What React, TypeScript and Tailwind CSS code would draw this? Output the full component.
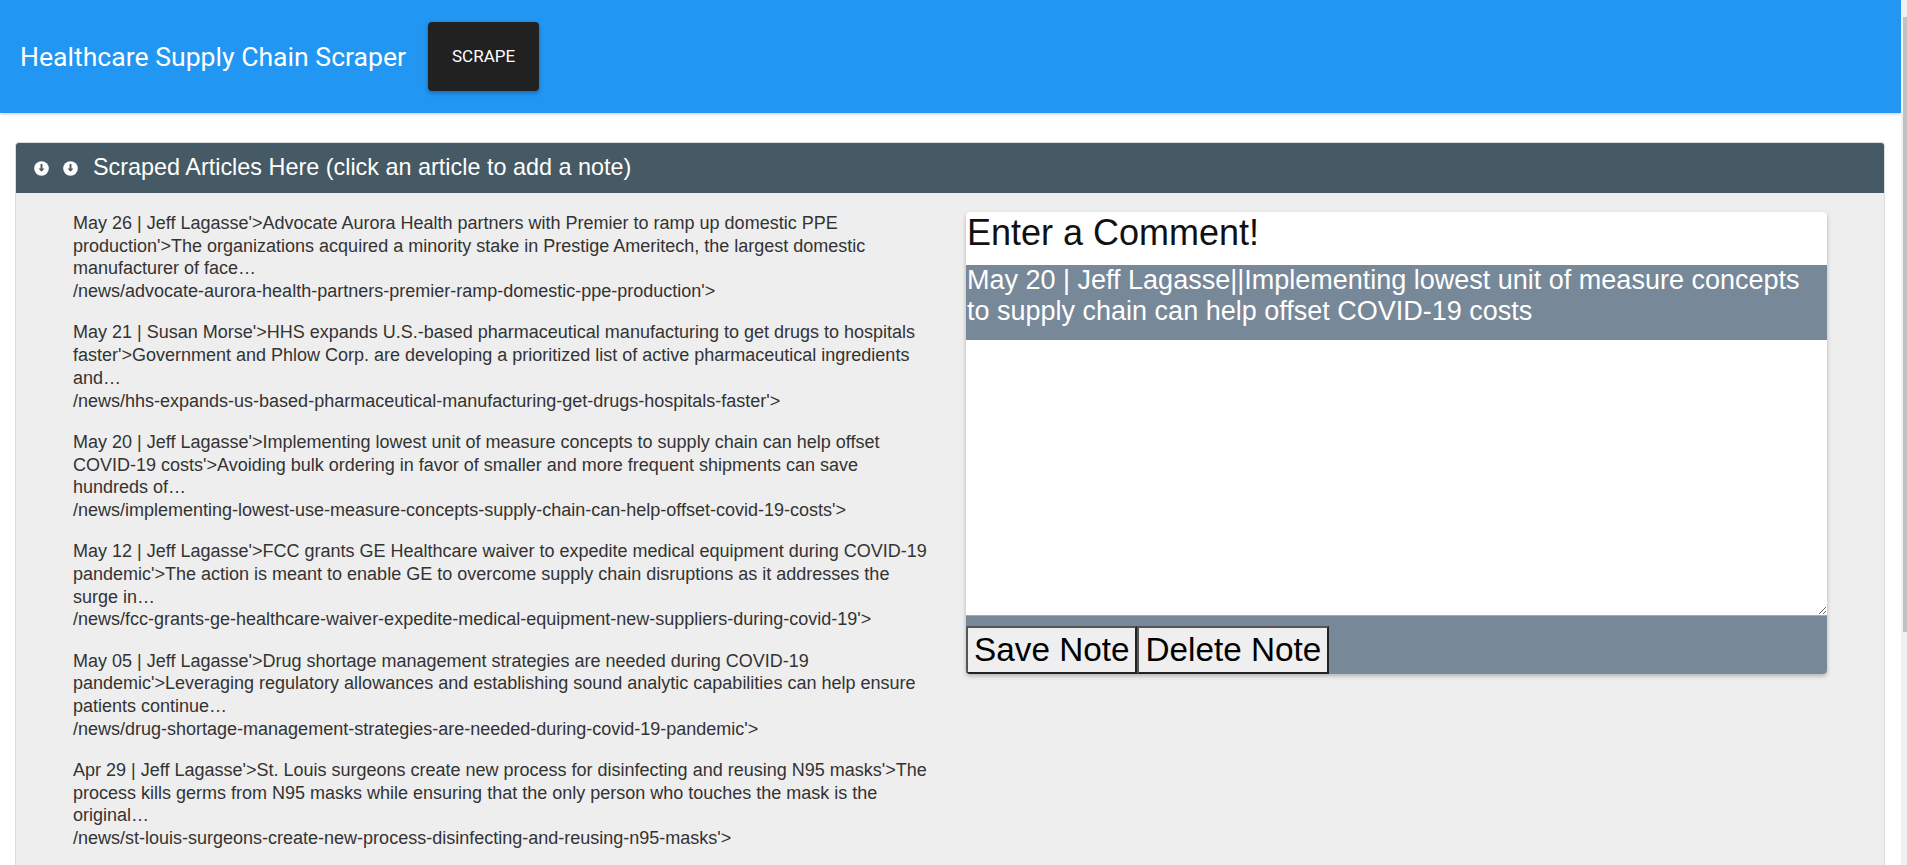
import * as React from "react";

const articles = [
  {
    text: "May 26 | Jeff Lagasse'>Advocate Aurora Health partners with Premier to ramp up domestic PPE production'>The organizations acquired a minority stake in Prestige Ameritech, the largest domestic manufacturer of face…",
    url: "/news/advocate-aurora-health-partners-premier-ramp-domestic-ppe-production'>",
  },
  {
    text: "May 21 | Susan Morse'>HHS expands U.S.-based pharmaceutical manufacturing to get drugs to hospitals faster'>Government and Phlow Corp. are developing a prioritized list of active pharmaceutical ingredients and…",
    url: "/news/hhs-expands-us-based-pharmaceutical-manufacturing-get-drugs-hospitals-faster'>",
  },
  {
    text: "May 20 | Jeff Lagasse'>Implementing lowest unit of measure concepts to supply chain can help offset COVID-19 costs'>Avoiding bulk ordering in favor of smaller and more frequent shipments can save hundreds of…",
    url: "/news/implementing-lowest-use-measure-concepts-supply-chain-can-help-offset-covid-19-costs'>",
  },
  {
    text: "May 12 | Jeff Lagasse'>FCC grants GE Healthcare waiver to expedite medical equipment during COVID-19 pandemic'>The action is meant to enable GE to overcome supply chain disruptions as it addresses the surge in…",
    url: "/news/fcc-grants-ge-healthcare-waiver-expedite-medical-equipment-new-suppliers-during-covid-19'>",
  },
  {
    text: "May 05 | Jeff Lagasse'>Drug shortage management strategies are needed during COVID-19 pandemic'>Leveraging regulatory allowances and establishing sound analytic capabilities can help ensure patients continue…",
    url: "/news/drug-shortage-management-strategies-are-needed-during-covid-19-pandemic'>",
  },
  {
    text: "Apr 29 | Jeff Lagasse'>St. Louis surgeons create new process for disinfecting and reusing N95 masks'>The process kills germs from N95 masks while ensuring that the only person who touches the mask is the original…",
    url: "/news/st-louis-surgeons-create-new-process-disinfecting-and-reusing-n95-masks'>",
  },
];

function CircleDown() {
  return (
    <svg width="15" height="15" viewBox="0 0 14 14" className="shrink-0">
      <circle cx="7" cy="7" r="6.8" fill="#ffffff" />
      <path d="M7 3.5v4.5" stroke="#455a64" strokeWidth="1.8" strokeLinecap="round" />
      <path d="M4.3 7.1L7 10l2.7-2.9z" fill="#455a64" />
    </svg>
  );
}

export default function App() {
  return (
    <div className="flex h-[865px] overflow-hidden bg-white font-['Liberation_Sans',Arial,sans-serif]">
      <div className="flex min-w-0 flex-1 flex-col">
        <header className="flex h-[113px] shrink-0 items-center bg-[#2196f3] shadow-[0_2px_2px_rgba(0,0,0,0.14)]">
          <h1 className="pl-[20px] font-['Roboto',sans-serif] text-[26.6px] text-white">
            Healthcare Supply Chain Scraper
          </h1>
          <button className="ml-[22px] flex h-[69px] w-[111px] items-center justify-center rounded-[4px] bg-[#212121] font-['Roboto',sans-serif] text-[17px] text-white shadow-[0_2px_4px_rgba(0,0,0,0.3)]">
            SCRAPE
          </button>
        </header>

        <div className="flex-1 pl-[15px] pr-[16px] pt-[29px]">
          <section className="h-full rounded-t-[3px] border border-[#dddddd] bg-[#eeeeee]">
            <div className="flex h-[50px] items-center gap-[14px] rounded-t-[3px] bg-[#455a64] pl-[18px] text-white">
              <CircleDown />
              <CircleDown />
              <span className="ml-[1px] text-[23.4px]">
                Scraped Articles Here (click an article to add a note)
              </span>
            </div>

            <div className="grid grid-cols-2">
              <div className="pl-[57px] pr-[16px] pt-[19px]">
                {articles.map((a) => (
                  <p key={a.url} className="mb-[18.6px] text-[18px] leading-[22.7px] text-[#333333]">
                    {a.text}
                    <span className="block">{a.url}</span>
                  </p>
                ))}
              </div>

              <div className="pl-[16px] pr-[57px] pt-[19px]">
                <div className="overflow-hidden rounded-[4px] bg-white shadow-[0_2px_4px_rgba(0,0,0,0.25)]">
                  <h2 className="pl-[1px] text-[36px] leading-[41px] text-[#111111]">Enter a Comment!</h2>
                  <div className="mt-[12px] bg-[#778899] pb-[13px] pl-[1px] text-[27px] leading-[31px] text-white">
                    May 20 | Jeff Lagasse||Implementing lowest unit of measure concepts to supply chain can help offset COVID-19 costs
                  </div>
                  <textarea className="block h-[276px] w-full border-0 border-b border-[#a9a9a9] bg-white outline-none" />
                  <div className="flex bg-[#778899] pt-[10px]">
                    <button className="flex h-[48px] items-center border-2 border-[#555555] border-b-[#222222] border-r-[#222222] bg-[#efefef] px-[6px] text-[33.3px] text-black">
                      Save Note
                    </button>
                    <button className="flex h-[48px] items-center border-2 border-[#555555] border-b-[#222222] border-r-[#222222] bg-[#efefef] px-[6px] text-[33.3px] text-black">
                      Delete Note
                    </button>
                  </div>
                </div>
              </div>
            </div>
          </section>
        </div>
      </div>

      <div className="w-[6px] shrink-0 bg-[#f1f1f1] pt-[17px]">
        <div className="ml-[2px] h-[615px] bg-[#c1c1c1]" />
      </div>
    </div>
  );
}
